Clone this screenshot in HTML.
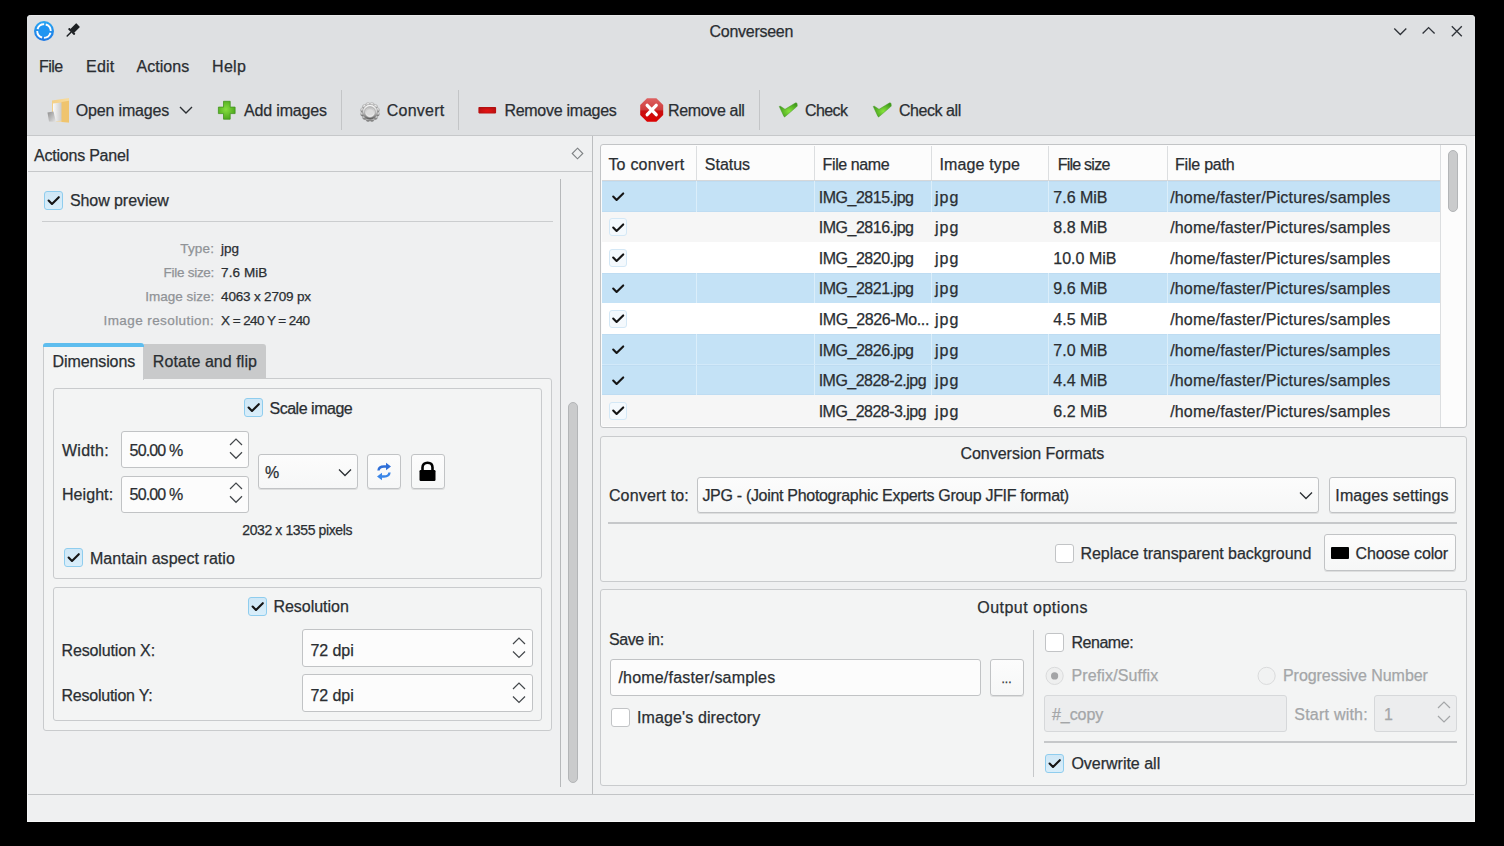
<!DOCTYPE html>
<html><head><meta charset="utf-8"><style>
html,body{margin:0;padding:0;}
body{width:1504px;height:846px;background:#000;position:relative;overflow:hidden;font-family:"Liberation Sans", sans-serif;}
.t{position:absolute;white-space:pre;line-height:20px;font-family:"Liberation Sans", sans-serif;-webkit-text-stroke:0.25px currentColor;}
svg{overflow:visible;}
</style></head><body>
<div style="position:absolute;left:27px;top:15px;width:1448px;height:807px;background:#eff0f1;border-radius:4px 4px 0 0;"></div>
<div style="position:absolute;left:27px;top:15px;width:1448px;height:120px;background:#dee0e2;border-radius:4px 4px 0 0;"></div>
<div style="position:absolute;left:27px;top:134.5px;width:1448px;height:1.6px;background:#c6c8ca;"></div>
<div style="position:absolute;left:31px;top:15px;width:1440px;height:1px;background:#e7e8ea;"></div>
<svg style="position:absolute;left:33px;top:20px" width="22" height="22" viewBox="0 0 22 22">
<defs><linearGradient id="ai" x1="0" y1="0" x2="0" y2="1"><stop offset="0" stop-color="#29a6f2"/><stop offset="1" stop-color="#1b78e6"/></linearGradient></defs>
<circle cx="11" cy="11" r="10" fill="url(#ai)"/>
<circle cx="11" cy="11" r="6.7" fill="none" stroke="#fbfcfd" stroke-width="2" stroke-dasharray="8.7 1.8" transform="rotate(-75 11 11)"/>
<circle cx="11" cy="11" r="5.5" fill="#1f95f2"/>
</svg>
<svg style="position:absolute;left:64px;top:18px" width="20" height="22" viewBox="0 0 20 22">
<g transform="translate(7.2,14) rotate(-45)" fill="#1d2023">
<rect x="1.4" y="-2.7" width="8.4" height="5.4" rx="0.5"/>
<rect x="-0.2" y="-4.3" width="1.9" height="8.6" rx="0.4"/>
<rect x="-6.4" y="-0.75" width="6.4" height="1.5" rx="0.7"/>
</g></svg>
<div class="t" style="letter-spacing:-0.265px;left:709.5px;top:21.66px;font-size:16px;color:#2a2e32;">Converseen</div>
<svg style="position:absolute;left:1390px;top:22px" width="80" height="18" viewBox="0 0 80 18">
<path d="M4.3 6.6 L10.3 12.6 L16.3 6.6" fill="none" stroke="#30343a" stroke-width="1.35"/>
<path d="M32.6 11.6 L38.6 5.6 L44.6 11.6" fill="none" stroke="#30343a" stroke-width="1.35"/>
<path d="M61.8 4.2 L71.8 14.2 M71.8 4.2 L61.8 14.2" fill="none" stroke="#30343a" stroke-width="1.35"/>
</svg>
<div class="t" style="letter-spacing:-0.527px;left:39px;top:56.86px;font-size:16px;color:#2a2e32;">File</div>
<div class="t" style="letter-spacing:0.207px;left:86px;top:56.86px;font-size:16px;color:#2a2e32;">Edit</div>
<div class="t" style="letter-spacing:0.039px;left:136.5px;top:56.86px;font-size:16px;color:#2a2e32;">Actions</div>
<div class="t" style="letter-spacing:0.331px;left:212px;top:56.86px;font-size:16px;color:#2a2e32;">Help</div>
<svg style="position:absolute;left:46px;top:97px" width="26" height="27" viewBox="0 0 26 27">
<defs><linearGradient id="fg" x1="0" x2="1"><stop offset="0" stop-color="#f3cf86"/><stop offset="1" stop-color="#f7dc9f"/></linearGradient>
<linearGradient id="pg" x1="0" x2="1"><stop offset="0" stop-color="#fafafa"/><stop offset="1" stop-color="#c9c9c9"/></linearGradient>
<linearGradient id="gg2" x1="0" y1="0" x2="1" y2="1"><stop offset="0" stop-color="#8f8f8f"/><stop offset="1" stop-color="#e6e6e6"/></linearGradient></defs>
<path d="M6 3.5 L23 1 L23 25.5 L6 24 Z" fill="url(#fg)"/>
<path d="M7 6.5 L16 5.5 L16 23.5 L7 24.5 Z" fill="url(#pg)"/>
<path d="M15.5 5 L23 3.8 L23 25.5 L15.5 25 Z" fill="#efc46e"/>
<path d="M1.5 15.5 L7.5 14.5 L10 25 L3 24.5 Z" fill="url(#gg2)"/>
</svg>
<div class="t" style="letter-spacing:-0.177px;left:75.8px;top:101.46px;font-size:16px;color:#2a2e32;">Open images</div>
<svg style="position:absolute;left:178px;top:104px" width="16" height="12" viewBox="0 0 16 12">
<path d="M2 3 L8 9 L14 3" fill="none" stroke="#2a2e32" stroke-width="1.4"/></svg>
<svg style="position:absolute;left:216px;top:100px" width="21" height="20" viewBox="0 0 21 20">
<defs><radialGradient id="gg" cx="0.45" cy="0.45" r="0.6"><stop offset="0" stop-color="#86de40"/><stop offset="1" stop-color="#4aa51c"/></radialGradient></defs>
<path d="M7.5 1.3 H14.2 V7.1 H19.1 V13.6 H14.2 V19.2 H7.5 V13.6 H2.4 V7.1 H7.5 Z" fill="url(#gg)" stroke="#44951f" stroke-width="0.8" stroke-linejoin="round"/></svg>
<div class="t" style="letter-spacing:-0.156px;left:244px;top:101.46px;font-size:16px;color:#2a2e32;">Add images</div>
<div style="position:absolute;left:341px;top:90px;width:1px;height:40px;background:#c3c5c7;"></div>
<svg style="position:absolute;left:359px;top:101px" width="22" height="22" viewBox="0 0 22 22">
<defs><linearGradient id="cg" x1="0" y1="0" x2="0" y2="1"><stop offset="0" stop-color="#fdfdfd"/><stop offset="0.5" stop-color="#cfcfcf"/><stop offset="1" stop-color="#4f4f4f"/></linearGradient>
<linearGradient id="cg2" x1="0" y1="0" x2="0" y2="1"><stop offset="0" stop-color="#bdbdbd"/><stop offset="1" stop-color="#f4f4f4"/></linearGradient></defs>
<g fill="url(#cg)" stroke="#8e8e8e" stroke-width="0.5"><circle cx="18.15" cy="12.90" r="2.3"/><circle cx="16.24" cy="16.22" r="2.3"/><circle cx="12.93" cy="18.14" r="2.3"/><circle cx="9.10" cy="18.15" r="2.3"/><circle cx="5.78" cy="16.24" r="2.3"/><circle cx="3.86" cy="12.93" r="2.3"/><circle cx="3.85" cy="9.10" r="2.3"/><circle cx="5.76" cy="5.78" r="2.3"/><circle cx="9.07" cy="3.86" r="2.3"/><circle cx="12.90" cy="3.85" r="2.3"/><circle cx="16.22" cy="5.76" r="2.3"/><circle cx="18.14" cy="9.07" r="2.3"/><circle cx="11" cy="11" r="7.6"/></g>
<circle cx="11" cy="11" r="5.4" fill="url(#cg2)" stroke="#9c9c9c" stroke-width="0.6"/>
<circle cx="11" cy="11.4" r="3.2" fill="#dcdcdc"/></svg>
<div class="t" style="letter-spacing:0.228px;left:386.8px;top:101.46px;font-size:16px;color:#2a2e32;">Convert</div>
<div style="position:absolute;left:458px;top:90px;width:1px;height:40px;background:#c3c5c7;"></div>
<svg style="position:absolute;left:477px;top:106px" width="21" height="9" viewBox="0 0 21 9">
<defs><radialGradient id="rg" cx="0.5" cy="0.6" r="0.6"><stop offset="0" stop-color="#e81414"/><stop offset="1" stop-color="#b01010"/></radialGradient></defs>
<rect x="1.4" y="1" width="17.7" height="6.4" rx="0.8" fill="url(#rg)"/></svg>
<div class="t" style="letter-spacing:-0.267px;left:504.4px;top:101.46px;font-size:16px;color:#2a2e32;">Remove images</div>
<svg style="position:absolute;left:637.5px;top:98px" width="27" height="25" viewBox="0 0 27 25">
<defs><linearGradient id="og" x1="0" y1="0" x2="0" y2="1"><stop offset="0" stop-color="#dd6262"/><stop offset="0.48" stop-color="#cf3c3c"/><stop offset="0.55" stop-color="#c80e0e"/><stop offset="1" stop-color="#dc0202"/></linearGradient></defs>
<path d="M9 0.3 H18.4 L25.2 7.1 V16.9 L18.4 23.7 H9 L2.2 16.9 V7.1 Z" fill="url(#og)"/>
<path d="M9.2 7.3 L18.2 16.7 M18.2 7.3 L9.2 16.7" stroke="#fff" stroke-width="3.3" stroke-linecap="round"/></svg>
<div class="t" style="letter-spacing:-0.348px;left:668px;top:101.46px;font-size:16px;color:#2a2e32;">Remove all</div>
<div style="position:absolute;left:759px;top:90px;width:1px;height:40px;background:#c3c5c7;"></div>
<svg style="position:absolute;left:776px;top:100px" width="24" height="20" viewBox="0 0 24 20"><defs><radialGradient id="kg1" cx="0.55" cy="0.6" r="0.6"><stop offset="0" stop-color="#86e33a"/><stop offset="1" stop-color="#3f9a1c"/></radialGradient></defs>
<path d="M3.3 6.6 Q3.6 5.8 4.4 6.2 L9 9.3 L19.3 3 Q20.6 2.4 21 3.6 L21.3 5.6 Q21.3 6.3 20.6 6.8 L9.2 16.6 Q8.4 17.3 7.9 16.4 Z" fill="url(#kg1)" stroke="#4b9a2a" stroke-width="0.5"/></svg>
<div class="t" style="letter-spacing:-0.615px;left:805px;top:101.46px;font-size:16px;color:#2a2e32;">Check</div>
<svg style="position:absolute;left:870px;top:100px" width="24" height="20" viewBox="0 0 24 20"><defs><radialGradient id="kg2" cx="0.55" cy="0.6" r="0.6"><stop offset="0" stop-color="#86e33a"/><stop offset="1" stop-color="#3f9a1c"/></radialGradient></defs>
<path d="M3.3 6.6 Q3.6 5.8 4.4 6.2 L9 9.3 L19.3 3 Q20.6 2.4 21 3.6 L21.3 5.6 Q21.3 6.3 20.6 6.8 L9.2 16.6 Q8.4 17.3 7.9 16.4 Z" fill="url(#kg2)" stroke="#4b9a2a" stroke-width="0.5"/></svg>
<div class="t" style="letter-spacing:-0.452px;left:899px;top:101.46px;font-size:16px;color:#2a2e32;">Check all</div>
<div class="t" style="letter-spacing:-0.220px;left:34px;top:146.46px;font-size:16px;color:#2a2e32;">Actions Panel</div>
<svg style="position:absolute;left:571px;top:147px" width="13" height="13" viewBox="0 0 13 13">
<path d="M6.5 1.2 L11.8 6.5 L6.5 11.8 L1.2 6.5 Z" fill="none" stroke="#7d8083" stroke-width="1.1"/></svg>
<div style="position:absolute;left:27px;top:171px;width:565px;height:1px;background:#c6c8ca;"></div>
<div style="position:absolute;left:592px;top:136px;width:1px;height:658px;background:#bcbec0;"></div>
<div style="position:absolute;left:44px;top:191px;width:17px;height:17px;border:1px solid #8fcdee;border-radius:3px;background:linear-gradient(#cfe7f6,#d9eefa)"></div>
<svg style="position:absolute;left:44px;top:191px" width="19" height="19" viewBox="0 0 19 19"><path d="M4.6 9.6 L8 13 L14.8 6.2" fill="none" stroke="#151515" stroke-width="2.1" stroke-linecap="round" stroke-linejoin="round"/></svg>
<div class="t" style="letter-spacing:-0.064px;left:69.9px;top:191.36px;font-size:16px;color:#2a2e32;">Show preview</div>
<div style="position:absolute;left:42px;top:221px;width:511px;height:1px;background:#cbcdcf;"></div>
<div class="t" style="letter-spacing:0.167px;right:1289.9px;top:239.32px;font-size:13.5px;color:#909397;">Type:</div>
<div class="t" style="left:221.1px;top:239.32px;font-size:13.5px;color:#2a2e32;">jpg</div>
<div class="t" style="letter-spacing:-0.263px;right:1289.9px;top:262.72px;font-size:13.5px;color:#909397;">File size:</div>
<div class="t" style="letter-spacing:0.070px;left:221.1px;top:262.72px;font-size:13.5px;color:#2a2e32;">7.6 MiB</div>
<div class="t" style="letter-spacing:-0.023px;right:1289.9px;top:287.12px;font-size:13.5px;color:#909397;">Image size:</div>
<div class="t" style="letter-spacing:-0.179px;left:221.1px;top:287.12px;font-size:13.5px;color:#2a2e32;">4063 x 2709 px</div>
<div class="t" style="letter-spacing:0.415px;right:1289.9px;top:311.22px;font-size:13.5px;color:#909397;">Image resolution:</div>
<div class="t" style="letter-spacing:-0.578px;left:221.1px;top:311.22px;font-size:13.5px;color:#2a2e32;">X = 240 Y = 240</div>
<div style="position:absolute;left:560px;top:179px;width:1px;height:608px;background:#b7b9bb;"></div>
<div style="position:absolute;left:568px;top:402px;width:10px;height:381px;background:#cacbcc;border:1px solid #b3b5b7;border-radius:5px;box-sizing:border-box;"></div>
<div style="position:absolute;left:43px;top:378px;width:509px;height:353px;border:1px solid #c9cbcd;border-radius:0 3px 3px 3px;background:#f3f4f4;box-sizing:border-box;"></div>
<div style="position:absolute;left:144px;top:343.5px;width:122px;height:35.5px;background:#c9cacb;border-radius:0 3px 0 0;"></div>
<div style="position:absolute;left:43px;top:343.5px;width:101px;height:36px;background:#f3f4f4;border:1px solid #c9cbcd;border-bottom:none;border-radius:3px 3px 0 0;box-sizing:border-box;"></div>
<div style="position:absolute;left:43px;top:343.3px;width:101px;height:3.7px;background:#5ebdee;border-radius:3px 3px 0 0;"></div>
<div class="t" style="letter-spacing:-0.110px;left:52.6px;top:352.16px;font-size:16px;color:#2a2e32;">Dimensions</div>
<div class="t" style="letter-spacing:0.072px;left:152.8px;top:352.16px;font-size:16px;color:#2a2e32;">Rotate and flip</div>
<div style="position:absolute;left:53px;top:388px;width:489px;height:191px;border:1px solid #c9cbcd;border-radius:3px;background:#f3f4f4;box-sizing:border-box;"></div>
<div style="position:absolute;left:244px;top:398px;width:17px;height:17px;border:1px solid #8fcdee;border-radius:3px;background:linear-gradient(#cfe7f6,#d9eefa)"></div>
<svg style="position:absolute;left:244px;top:398px" width="19" height="19" viewBox="0 0 19 19"><path d="M4.6 9.6 L8 13 L14.8 6.2" fill="none" stroke="#151515" stroke-width="2.1" stroke-linecap="round" stroke-linejoin="round"/></svg>
<div class="t" style="letter-spacing:-0.485px;left:269.5px;top:398.66px;font-size:16px;color:#2a2e32;">Scale image</div>
<div class="t" style="letter-spacing:0.291px;left:61.9px;top:441.06px;font-size:16px;color:#2a2e32;">Width:</div>
<div style="position:absolute;left:121px;top:431px;width:128px;height:37px;border:1px solid #c1c3c5;border-radius:3px;background:#fcfcfc;box-sizing:border-box;"></div>
<div class="t" style="letter-spacing:-0.853px;left:129.6px;top:441.06px;font-size:16px;color:#2a2e32;">50.00 %</div>
<svg style="position:absolute;left:227.7px;top:437.3px" width="16" height="23.30000000000001" viewBox="0 0 16 23.30000000000001">
<path d="M2 8 L8 2 L14 8" fill="none" stroke="#43474b" stroke-width="1.2"/>
<path d="M2 15.300000000000011 L8 21.30000000000001 L14 15.300000000000011" fill="none" stroke="#43474b" stroke-width="1.2"/></svg>
<div class="t" style="letter-spacing:0.083px;left:61.9px;top:484.76px;font-size:16px;color:#2a2e32;">Height:</div>
<div style="position:absolute;left:121px;top:476px;width:128px;height:37px;border:1px solid #c1c3c5;border-radius:3px;background:#fcfcfc;box-sizing:border-box;"></div>
<div class="t" style="letter-spacing:-0.853px;left:129.6px;top:484.76px;font-size:16px;color:#2a2e32;">50.00 %</div>
<svg style="position:absolute;left:227.7px;top:481.3px" width="16" height="23.30000000000001" viewBox="0 0 16 23.30000000000001">
<path d="M2 8 L8 2 L14 8" fill="none" stroke="#43474b" stroke-width="1.2"/>
<path d="M2 15.300000000000011 L8 21.30000000000001 L14 15.300000000000011" fill="none" stroke="#43474b" stroke-width="1.2"/></svg>
<div style="position:absolute;left:258px;top:454px;width:100px;height:35px;border:1px solid #c1c3c5;border-radius:3px;background:linear-gradient(#fcfcfc,#f6f7f7);box-sizing:border-box;box-shadow:0 1px 0.5px rgba(0,0,0,0.09);"></div>
<div class="t" style="letter-spacing:-1.034px;left:265px;top:462.86px;font-size:16px;color:#2a2e32;">%</div>
<svg style="position:absolute;left:337px;top:467px" width="16" height="11" viewBox="0 0 16 11"><path d="M2 2.5 L8 8.5 L14 2.5" fill="none" stroke="#2a2e32" stroke-width="1.3"/></svg>
<div style="position:absolute;left:367px;top:454px;width:34px;height:35px;border:1px solid #c1c3c5;border-radius:3px;background:linear-gradient(#fcfcfc,#f6f7f7);box-sizing:border-box;box-shadow:0 1px 0.5px rgba(0,0,0,0.09);"></div>
<svg style="position:absolute;left:375px;top:462px" width="18" height="19" viewBox="0 0 18 19">
<path d="M3.5 8.5 C3.8 5.5 6.5 4.5 9 4.5 L12 4.5" fill="none" stroke="#2f6fd8" stroke-width="2.4"/>
<path d="M11 0.8 L16 4.5 L11 8.2 Z" fill="#2f6fd8"/>
<path d="M14.5 10.5 C14.2 13.5 11.5 14.5 9 14.5 L6 14.5" fill="none" stroke="#3a86e8" stroke-width="2.4"/>
<path d="M7 10.8 L2 14.5 L7 18.2 Z" fill="#3a86e8"/></svg>
<div style="position:absolute;left:411px;top:454px;width:34px;height:35px;border:1px solid #c1c3c5;border-radius:3px;background:linear-gradient(#fcfcfc,#f6f7f7);box-sizing:border-box;box-shadow:0 1px 0.5px rgba(0,0,0,0.09);"></div>
<svg style="position:absolute;left:418px;top:461px" width="19" height="21" viewBox="0 0 19 21">
<path d="M4.5 9 V6.5 C4.5 3.5 6.5 1.8 9.5 1.8 C12.5 1.8 14.5 3.5 14.5 6.5 V9" fill="none" stroke="#000" stroke-width="2.6"/>
<rect x="1.5" y="9" width="16" height="11" rx="1.2" fill="#000"/></svg>
<div class="t" style="letter-spacing:-0.392px;left:242.3px;top:520.45px;font-size:14px;color:#2a2e32;">2032 x 1355 pixels</div>
<div style="position:absolute;left:64px;top:548px;width:17px;height:17px;border:1px solid #8fcdee;border-radius:3px;background:linear-gradient(#cfe7f6,#d9eefa)"></div>
<svg style="position:absolute;left:64px;top:548px" width="19" height="19" viewBox="0 0 19 19"><path d="M4.6 9.6 L8 13 L14.8 6.2" fill="none" stroke="#151515" stroke-width="2.1" stroke-linecap="round" stroke-linejoin="round"/></svg>
<div class="t" style="letter-spacing:0.038px;left:90px;top:548.86px;font-size:16px;color:#2a2e32;">Mantain aspect ratio</div>
<div style="position:absolute;left:53px;top:587px;width:489px;height:134px;border:1px solid #c9cbcd;border-radius:3px;background:#f3f4f4;box-sizing:border-box;"></div>
<div style="position:absolute;left:247.5px;top:597px;width:17px;height:17px;border:1px solid #8fcdee;border-radius:3px;background:linear-gradient(#cfe7f6,#d9eefa)"></div>
<svg style="position:absolute;left:247.5px;top:597px" width="19" height="19" viewBox="0 0 19 19"><path d="M4.6 9.6 L8 13 L14.8 6.2" fill="none" stroke="#151515" stroke-width="2.1" stroke-linecap="round" stroke-linejoin="round"/></svg>
<div class="t" style="letter-spacing:-0.012px;left:273.4px;top:597.36px;font-size:16px;color:#2a2e32;">Resolution</div>
<div class="t" style="letter-spacing:-0.131px;left:61.5px;top:640.96px;font-size:16px;color:#2a2e32;">Resolution X:</div>
<div style="position:absolute;left:301.5px;top:629px;width:231.5px;height:37.5px;border:1px solid #c1c3c5;border-radius:3px;background:#fcfcfc;box-sizing:border-box;"></div>
<div class="t" style="letter-spacing:-0.079px;left:310.5px;top:640.96px;font-size:16px;color:#2a2e32;">72 dpi</div>
<svg style="position:absolute;left:510.5px;top:636px" width="16" height="23.5" viewBox="0 0 16 23.5">
<path d="M2 8 L8 2 L14 8" fill="none" stroke="#43474b" stroke-width="1.2"/>
<path d="M2 15.5 L8 21.5 L14 15.5" fill="none" stroke="#43474b" stroke-width="1.2"/></svg>
<div class="t" style="letter-spacing:-0.233px;left:61.5px;top:685.66px;font-size:16px;color:#2a2e32;">Resolution Y:</div>
<div style="position:absolute;left:301.5px;top:674px;width:231.5px;height:37.5px;border:1px solid #c1c3c5;border-radius:3px;background:#fcfcfc;box-sizing:border-box;"></div>
<div class="t" style="letter-spacing:-0.079px;left:310.5px;top:685.66px;font-size:16px;color:#2a2e32;">72 dpi</div>
<svg style="position:absolute;left:510.5px;top:681px" width="16" height="23.5" viewBox="0 0 16 23.5">
<path d="M2 8 L8 2 L14 8" fill="none" stroke="#43474b" stroke-width="1.2"/>
<path d="M2 15.5 L8 21.5 L14 15.5" fill="none" stroke="#43474b" stroke-width="1.2"/></svg>
<div style="position:absolute;left:600px;top:144px;width:867px;height:284px;border:1px solid #c2c4c6;border-radius:3px;background:#fcfcfc;box-sizing:border-box;"></div>
<div style="position:absolute;left:601.5px;top:145.5px;width:839px;height:34.5px;background:#fcfcfc;"></div>
<div style="position:absolute;left:601.5px;top:180px;width:839px;height:1px;background:#d5d7d9;"></div>
<div style="position:absolute;left:696.4px;top:146px;width:1px;height:34px;background:#dcdee0;"></div>
<div style="position:absolute;left:813.7px;top:146px;width:1px;height:34px;background:#dcdee0;"></div>
<div style="position:absolute;left:931px;top:146px;width:1px;height:34px;background:#dcdee0;"></div>
<div style="position:absolute;left:1048.4px;top:146px;width:1px;height:34px;background:#dcdee0;"></div>
<div style="position:absolute;left:1166.5px;top:146px;width:1px;height:34px;background:#dcdee0;"></div>
<div class="t" style="letter-spacing:0.221px;left:608.4px;top:155.06px;font-size:16px;color:#2a2e32;">To convert</div>
<div class="t" style="letter-spacing:-0.012px;left:704.8px;top:155.06px;font-size:16px;color:#2a2e32;">Status</div>
<div class="t" style="letter-spacing:-0.394px;left:822.6px;top:155.06px;font-size:16px;color:#2a2e32;">File name</div>
<div class="t" style="letter-spacing:0.149px;left:939.4px;top:155.06px;font-size:16px;color:#2a2e32;">Image type</div>
<div class="t" style="letter-spacing:-0.761px;left:1057.7px;top:155.06px;font-size:16px;color:#2a2e32;">File size</div>
<div class="t" style="letter-spacing:-0.209px;left:1175px;top:155.06px;font-size:16px;color:#2a2e32;">File path</div>
<div style="position:absolute;left:602px;top:181.2px;width:838px;height:30.67px;background:#c4e2f6;box-shadow:inset 0 1px 0 #bedcf2, inset 0 -1px 0 #bedcf2;"></div>
<div style="position:absolute;left:696.4px;top:181.2px;width:1px;height:30.57px;background:#dbeefa;"></div>
<div style="position:absolute;left:813.7px;top:181.2px;width:1px;height:30.57px;background:#dbeefa;"></div>
<div style="position:absolute;left:931px;top:181.2px;width:1px;height:30.57px;background:#dbeefa;"></div>
<div style="position:absolute;left:1048.4px;top:181.2px;width:1px;height:30.57px;background:#dbeefa;"></div>
<div style="position:absolute;left:1166.5px;top:181.2px;width:1px;height:30.57px;background:#dbeefa;"></div>
<svg style="position:absolute;left:609px;top:188.20px" width="18" height="17" viewBox="0 0 18 17"><path d="M4.2 8.6 L7.6 12 L14.2 5.4" fill="none" stroke="#151515" stroke-width="2.1" stroke-linecap="round" stroke-linejoin="round"/></svg>
<div class="t" style="letter-spacing:-0.474px;left:818.7px;top:187.66px;font-size:16px;color:#2a2e32;">IMG_2815.jpg</div>
<div class="t" style="letter-spacing:1.020px;left:935px;top:187.66px;font-size:16px;color:#2a2e32;">jpg</div>
<div class="t" style="left:1053.3px;top:187.66px;font-size:16px;color:#2a2e32;">7.6 MiB</div>
<div class="t" style="letter-spacing:0.171px;left:1170.2px;top:187.66px;font-size:16px;color:#2a2e32;">/home/faster/Pictures/samples</div>
<div style="position:absolute;left:602px;top:211.77px;width:838px;height:30.67px;background:#f6f6f6;"></div>
<div style="position:absolute;left:608.5px;top:218.27px;width:18px;height:18px;border:1px solid #d4e8f6;border-radius:3px;background:#f4f9fd;box-sizing:border-box;"></div>
<svg style="position:absolute;left:609px;top:218.77px" width="18" height="17" viewBox="0 0 18 17"><path d="M4.2 8.6 L7.6 12 L14.2 5.4" fill="none" stroke="#151515" stroke-width="2.1" stroke-linecap="round" stroke-linejoin="round"/></svg>
<div class="t" style="letter-spacing:-0.474px;left:818.7px;top:218.23px;font-size:16px;color:#2a2e32;">IMG_2816.jpg</div>
<div class="t" style="letter-spacing:1.020px;left:935px;top:218.23px;font-size:16px;color:#2a2e32;">jpg</div>
<div class="t" style="left:1053.3px;top:218.23px;font-size:16px;color:#2a2e32;">8.8 MiB</div>
<div class="t" style="letter-spacing:0.171px;left:1170.2px;top:218.23px;font-size:16px;color:#2a2e32;">/home/faster/Pictures/samples</div>
<div style="position:absolute;left:602px;top:242.34px;width:838px;height:30.67px;background:#ffffff;"></div>
<div style="position:absolute;left:608.5px;top:248.84px;width:18px;height:18px;border:1px solid #d4e8f6;border-radius:3px;background:#f4f9fd;box-sizing:border-box;"></div>
<svg style="position:absolute;left:609px;top:249.34px" width="18" height="17" viewBox="0 0 18 17"><path d="M4.2 8.6 L7.6 12 L14.2 5.4" fill="none" stroke="#151515" stroke-width="2.1" stroke-linecap="round" stroke-linejoin="round"/></svg>
<div class="t" style="letter-spacing:-0.474px;left:818.7px;top:248.80px;font-size:16px;color:#2a2e32;">IMG_2820.jpg</div>
<div class="t" style="letter-spacing:1.020px;left:935px;top:248.80px;font-size:16px;color:#2a2e32;">jpg</div>
<div class="t" style="left:1053.3px;top:248.80px;font-size:16px;color:#2a2e32;">10.0 MiB</div>
<div class="t" style="letter-spacing:0.171px;left:1170.2px;top:248.80px;font-size:16px;color:#2a2e32;">/home/faster/Pictures/samples</div>
<div style="position:absolute;left:602px;top:272.91px;width:838px;height:30.67px;background:#c4e2f6;box-shadow:inset 0 1px 0 #bedcf2, inset 0 -1px 0 #bedcf2;"></div>
<div style="position:absolute;left:696.4px;top:272.91px;width:1px;height:30.57px;background:#dbeefa;"></div>
<div style="position:absolute;left:813.7px;top:272.91px;width:1px;height:30.57px;background:#dbeefa;"></div>
<div style="position:absolute;left:931px;top:272.91px;width:1px;height:30.57px;background:#dbeefa;"></div>
<div style="position:absolute;left:1048.4px;top:272.91px;width:1px;height:30.57px;background:#dbeefa;"></div>
<div style="position:absolute;left:1166.5px;top:272.91px;width:1px;height:30.57px;background:#dbeefa;"></div>
<svg style="position:absolute;left:609px;top:279.91px" width="18" height="17" viewBox="0 0 18 17"><path d="M4.2 8.6 L7.6 12 L14.2 5.4" fill="none" stroke="#151515" stroke-width="2.1" stroke-linecap="round" stroke-linejoin="round"/></svg>
<div class="t" style="letter-spacing:-0.474px;left:818.7px;top:279.37px;font-size:16px;color:#2a2e32;">IMG_2821.jpg</div>
<div class="t" style="letter-spacing:1.020px;left:935px;top:279.37px;font-size:16px;color:#2a2e32;">jpg</div>
<div class="t" style="left:1053.3px;top:279.37px;font-size:16px;color:#2a2e32;">9.6 MiB</div>
<div class="t" style="letter-spacing:0.171px;left:1170.2px;top:279.37px;font-size:16px;color:#2a2e32;">/home/faster/Pictures/samples</div>
<div style="position:absolute;left:602px;top:303.48px;width:838px;height:30.67px;background:#ffffff;"></div>
<div style="position:absolute;left:608.5px;top:309.98px;width:18px;height:18px;border:1px solid #d4e8f6;border-radius:3px;background:#f4f9fd;box-sizing:border-box;"></div>
<svg style="position:absolute;left:609px;top:310.48px" width="18" height="17" viewBox="0 0 18 17"><path d="M4.2 8.6 L7.6 12 L14.2 5.4" fill="none" stroke="#151515" stroke-width="2.1" stroke-linecap="round" stroke-linejoin="round"/></svg>
<div class="t" style="letter-spacing:-0.378px;left:818.7px;top:309.94px;font-size:16px;color:#2a2e32;">IMG_2826-Mo...</div>
<div class="t" style="letter-spacing:1.020px;left:935px;top:309.94px;font-size:16px;color:#2a2e32;">jpg</div>
<div class="t" style="left:1053.3px;top:309.94px;font-size:16px;color:#2a2e32;">4.5 MiB</div>
<div class="t" style="letter-spacing:0.171px;left:1170.2px;top:309.94px;font-size:16px;color:#2a2e32;">/home/faster/Pictures/samples</div>
<div style="position:absolute;left:602px;top:334.05px;width:838px;height:30.67px;background:#c4e2f6;box-shadow:inset 0 1px 0 #bedcf2, inset 0 -1px 0 #bedcf2;"></div>
<div style="position:absolute;left:696.4px;top:334.05px;width:1px;height:30.57px;background:#dbeefa;"></div>
<div style="position:absolute;left:813.7px;top:334.05px;width:1px;height:30.57px;background:#dbeefa;"></div>
<div style="position:absolute;left:931px;top:334.05px;width:1px;height:30.57px;background:#dbeefa;"></div>
<div style="position:absolute;left:1048.4px;top:334.05px;width:1px;height:30.57px;background:#dbeefa;"></div>
<div style="position:absolute;left:1166.5px;top:334.05px;width:1px;height:30.57px;background:#dbeefa;"></div>
<svg style="position:absolute;left:609px;top:341.05px" width="18" height="17" viewBox="0 0 18 17"><path d="M4.2 8.6 L7.6 12 L14.2 5.4" fill="none" stroke="#151515" stroke-width="2.1" stroke-linecap="round" stroke-linejoin="round"/></svg>
<div class="t" style="letter-spacing:-0.474px;left:818.7px;top:340.51px;font-size:16px;color:#2a2e32;">IMG_2826.jpg</div>
<div class="t" style="letter-spacing:1.020px;left:935px;top:340.51px;font-size:16px;color:#2a2e32;">jpg</div>
<div class="t" style="left:1053.3px;top:340.51px;font-size:16px;color:#2a2e32;">7.0 MiB</div>
<div class="t" style="letter-spacing:0.171px;left:1170.2px;top:340.51px;font-size:16px;color:#2a2e32;">/home/faster/Pictures/samples</div>
<div style="position:absolute;left:602px;top:364.62px;width:838px;height:30.67px;background:#c4e2f6;box-shadow:inset 0 1px 0 #bedcf2, inset 0 -1px 0 #bedcf2;"></div>
<div style="position:absolute;left:602px;top:364.12px;width:838px;height:1px;background:#d2e9f9;"></div>
<div style="position:absolute;left:696.4px;top:364.62px;width:1px;height:30.57px;background:#dbeefa;"></div>
<div style="position:absolute;left:813.7px;top:364.62px;width:1px;height:30.57px;background:#dbeefa;"></div>
<div style="position:absolute;left:931px;top:364.62px;width:1px;height:30.57px;background:#dbeefa;"></div>
<div style="position:absolute;left:1048.4px;top:364.62px;width:1px;height:30.57px;background:#dbeefa;"></div>
<div style="position:absolute;left:1166.5px;top:364.62px;width:1px;height:30.57px;background:#dbeefa;"></div>
<svg style="position:absolute;left:609px;top:371.62px" width="18" height="17" viewBox="0 0 18 17"><path d="M4.2 8.6 L7.6 12 L14.2 5.4" fill="none" stroke="#151515" stroke-width="2.1" stroke-linecap="round" stroke-linejoin="round"/></svg>
<div class="t" style="letter-spacing:-0.526px;left:818.7px;top:371.08px;font-size:16px;color:#2a2e32;">IMG_2828-2.jpg</div>
<div class="t" style="letter-spacing:1.020px;left:935px;top:371.08px;font-size:16px;color:#2a2e32;">jpg</div>
<div class="t" style="left:1053.3px;top:371.08px;font-size:16px;color:#2a2e32;">4.4 MiB</div>
<div class="t" style="letter-spacing:0.171px;left:1170.2px;top:371.08px;font-size:16px;color:#2a2e32;">/home/faster/Pictures/samples</div>
<div style="position:absolute;left:602px;top:395.19px;width:838px;height:30.67px;background:#f6f6f6;"></div>
<div style="position:absolute;left:608.5px;top:401.69px;width:18px;height:18px;border:1px solid #d4e8f6;border-radius:3px;background:#f4f9fd;box-sizing:border-box;"></div>
<svg style="position:absolute;left:609px;top:402.19px" width="18" height="17" viewBox="0 0 18 17"><path d="M4.2 8.6 L7.6 12 L14.2 5.4" fill="none" stroke="#151515" stroke-width="2.1" stroke-linecap="round" stroke-linejoin="round"/></svg>
<div class="t" style="letter-spacing:-0.526px;left:818.7px;top:401.65px;font-size:16px;color:#2a2e32;">IMG_2828-3.jpg</div>
<div class="t" style="letter-spacing:1.020px;left:935px;top:401.65px;font-size:16px;color:#2a2e32;">jpg</div>
<div class="t" style="left:1053.3px;top:401.65px;font-size:16px;color:#2a2e32;">6.2 MiB</div>
<div class="t" style="letter-spacing:0.171px;left:1170.2px;top:401.65px;font-size:16px;color:#2a2e32;">/home/faster/Pictures/samples</div>
<div style="position:absolute;left:1440px;top:145px;width:1px;height:282px;background:#dcdee0;"></div>
<div style="position:absolute;left:1448px;top:149.5px;width:10px;height:62px;background:#cacbcc;border:1px solid #b3b5b7;border-radius:5px;box-sizing:border-box;"></div>
<div style="position:absolute;left:600px;top:436px;width:867px;height:146px;border:1px solid #c9cbcd;border-radius:3px;background:#f3f4f4;box-sizing:border-box;"></div>
<div class="t" style="letter-spacing:-0.015px;left:1032.3px;transform:translateX(-50%);top:444.36px;font-size:16px;color:#2a2e32;">Conversion Formats</div>
<div class="t" style="letter-spacing:0.163px;left:608.9px;top:486.46px;font-size:16px;color:#2a2e32;">Convert to:</div>
<div style="position:absolute;left:696.5px;top:477.3px;width:622.5px;height:35.5px;border:1px solid #c1c3c5;border-radius:3px;background:linear-gradient(#fcfcfc,#f6f7f7);box-sizing:border-box;box-shadow:0 1px 0.5px rgba(0,0,0,0.09);"></div>
<div class="t" style="letter-spacing:-0.305px;left:702.4px;top:486.46px;font-size:16px;color:#2a2e32;">JPG - (Joint Photographic Experts Group JFIF format)</div>
<svg style="position:absolute;left:1298px;top:490px" width="16" height="11" viewBox="0 0 16 11"><path d="M2 2.5 L8 8.5 L14 2.5" fill="none" stroke="#2a2e32" stroke-width="1.3"/></svg>
<div style="position:absolute;left:1328.5px;top:477.3px;width:127.2px;height:35.5px;border:1px solid #c1c3c5;border-radius:3px;background:linear-gradient(#fcfcfc,#f6f7f7);box-sizing:border-box;box-shadow:0 1px 0.5px rgba(0,0,0,0.09);"></div>
<div class="t" style="letter-spacing:0.081px;left:1392px;transform:translateX(-50%);top:486.46px;font-size:16px;color:#2a2e32;">Images settings</div>
<div style="position:absolute;left:608px;top:522.2px;width:849px;height:1.8px;background:#c6c8ca;"></div>
<div style="position:absolute;left:1054.5px;top:544px;width:17px;height:17px;border:1px solid #c2c4c6;border-radius:3px;background:#fff"></div>
<div class="t" style="letter-spacing:-0.047px;left:1080.5px;top:544.16px;font-size:16px;color:#2a2e32;">Replace transparent background</div>
<div style="position:absolute;left:1323.7px;top:533.6px;width:132px;height:37.2px;border:1px solid #c1c3c5;border-radius:3px;background:linear-gradient(#fcfcfc,#f6f7f7);box-sizing:border-box;box-shadow:0 1px 0.5px rgba(0,0,0,0.09);"></div>
<div style="position:absolute;left:1330.7px;top:546.8px;width:18.7px;height:12px;background:#000;border-radius:1px;"></div>
<div class="t" style="letter-spacing:-0.144px;left:1355.5px;top:544.16px;font-size:16px;color:#2a2e32;">Choose color</div>
<div style="position:absolute;left:600px;top:589px;width:867px;height:197px;border:1px solid #c9cbcd;border-radius:3px;background:#f3f4f4;box-sizing:border-box;"></div>
<div class="t" style="letter-spacing:0.471px;left:1032.6px;transform:translateX(-50%);top:598.16px;font-size:16px;color:#2a2e32;">Output options</div>
<div class="t" style="letter-spacing:-0.373px;left:608.9px;top:630.46px;font-size:16px;color:#2a2e32;">Save in:</div>
<div style="position:absolute;left:609.7px;top:659px;width:371.7px;height:37px;border:1px solid #c1c3c5;border-radius:3px;background:#fcfcfc;box-sizing:border-box;"></div>
<div class="t" style="letter-spacing:0.202px;left:618.4px;top:667.86px;font-size:16px;color:#2a2e32;">/home/faster/samples</div>
<div style="position:absolute;left:990.4px;top:659px;width:33.5px;height:37px;border:1px solid #c1c3c5;border-radius:3px;background:linear-gradient(#fcfcfc,#f6f7f7);box-sizing:border-box;box-shadow:0 1px 0.5px rgba(0,0,0,0.09);"></div>
<div class="t" style="left:1006.5px;transform:translateX(-50%);top:669.24px;font-size:12px;color:#2a2e32;">...</div>
<div style="position:absolute;left:611px;top:707.5px;width:17px;height:17px;border:1px solid #c2c4c6;border-radius:3px;background:#fff"></div>
<div class="t" style="letter-spacing:0.117px;left:637px;top:708.26px;font-size:16px;color:#2a2e32;">Image's directory</div>
<div style="position:absolute;left:1033px;top:629.5px;width:1px;height:147px;background:#c6c8ca;"></div>
<div style="position:absolute;left:1045.4px;top:633.3px;width:17px;height:17px;border:1px solid #c2c4c6;border-radius:3px;background:#fff"></div>
<div class="t" style="letter-spacing:-0.454px;left:1071.4px;top:633.36px;font-size:16px;color:#2a2e32;">Rename:</div>
<svg style="position:absolute;left:1045px;top:665.5px" width="20" height="20" viewBox="0 0 20 20">
<circle cx="9.6" cy="9.9" r="8.6" fill="#eeefef" stroke="#dadbdc" stroke-width="1"/><circle cx="9.6" cy="9.9" r="3.6" fill="#a3a4a6"/></svg>
<div class="t" style="letter-spacing:0.143px;left:1071.4px;top:666.06px;font-size:16px;color:#a4a6a8;">Prefix/Suffix</div>
<svg style="position:absolute;left:1256.5px;top:665.5px" width="20" height="20" viewBox="0 0 20 20">
<circle cx="9.6" cy="9.9" r="8.6" fill="#f1f2f2" stroke="#dadbdc" stroke-width="1"/></svg>
<div class="t" style="letter-spacing:-0.055px;left:1283px;top:666.06px;font-size:16px;color:#a4a6a8;">Progressive Number</div>
<div style="position:absolute;left:1043.5px;top:695.2px;width:243.2px;height:36.6px;border:1px solid #d6d8da;border-radius:3px;background:#ecedee;box-sizing:border-box;"></div>
<div class="t" style="letter-spacing:-0.079px;left:1052px;top:704.66px;font-size:16px;color:#a4a6a8;">#_copy</div>
<div class="t" style="letter-spacing:0.226px;left:1294.3px;top:704.66px;font-size:16px;color:#a4a6a8;">Start with:</div>
<div style="position:absolute;left:1373.8px;top:695.2px;width:83.5px;height:36.6px;border:1px solid #d6d8da;border-radius:3px;background:#ecedee;box-sizing:border-box;"></div>
<div class="t" style="left:1384px;top:704.66px;font-size:16px;color:#a4a6a8;">1</div>
<svg style="position:absolute;left:1435.5px;top:699.5px" width="16" height="24.0" viewBox="0 0 16 24.0">
<path d="M2 8 L8 2 L14 8" fill="none" stroke="#a4a6a8" stroke-width="1.2"/>
<path d="M2 16.0 L8 22.0 L14 16.0" fill="none" stroke="#a4a6a8" stroke-width="1.2"/></svg>
<div style="position:absolute;left:1043.5px;top:740.8px;width:413.5px;height:1.8px;background:#c6c8ca;"></div>
<div style="position:absolute;left:1045.4px;top:754px;width:17px;height:17px;border:1px solid #8fcdee;border-radius:3px;background:linear-gradient(#cfe7f6,#d9eefa)"></div>
<svg style="position:absolute;left:1045.4px;top:754px" width="19" height="19" viewBox="0 0 19 19"><path d="M4.6 9.6 L8 13 L14.8 6.2" fill="none" stroke="#151515" stroke-width="2.1" stroke-linecap="round" stroke-linejoin="round"/></svg>
<div class="t" style="letter-spacing:-0.009px;left:1071.4px;top:754.16px;font-size:16px;color:#2a2e32;">Overwrite all</div>
<div style="position:absolute;left:27px;top:794px;width:1448px;height:1px;background:#c2c4c6;"></div>
<div style="position:absolute;left:27px;top:821px;width:1448px;height:1px;background:#f7f8f8;"></div>
<div style="position:absolute;left:27px;top:136px;width:1px;height:685px;background:#f5f6f7;"></div>
<div style="position:absolute;left:1474px;top:136px;width:1px;height:685px;background:#f7f8f8;"></div>
</body></html>
